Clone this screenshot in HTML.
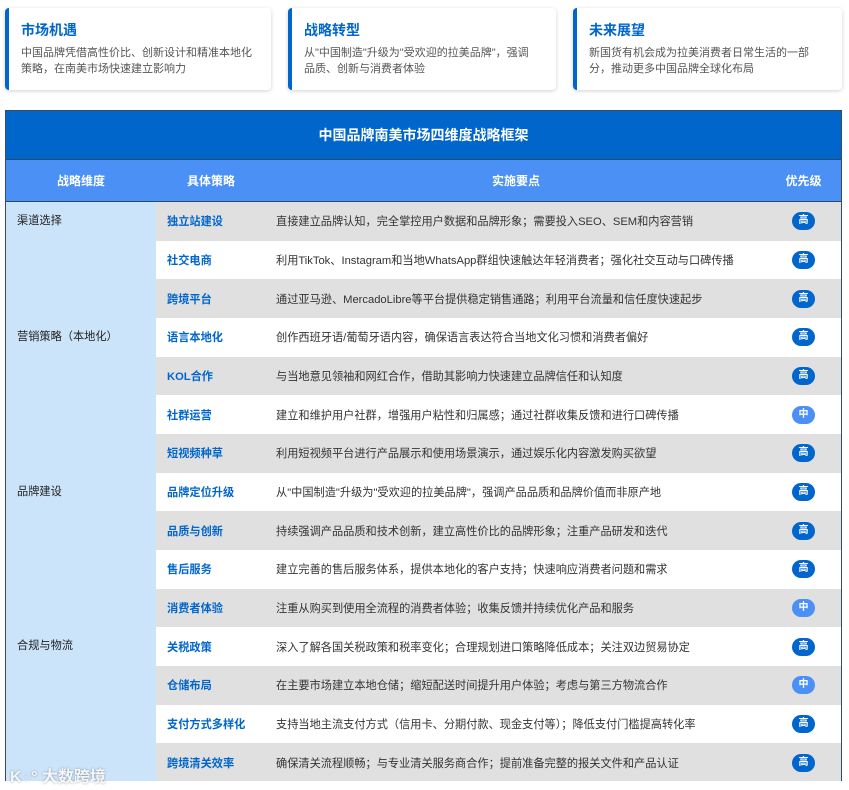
<!DOCTYPE html>
<html><head><meta charset="utf-8"><style>
*{margin:0;padding:0;box-sizing:border-box}
body{width:849px;height:790px;background:#fff;font-family:"Liberation Sans","Noto Sans CJK SC",sans-serif;position:relative;overflow:hidden}
.card{position:absolute;top:8px;height:82px;background:#fff;border-radius:4px;box-shadow:0 1px 4px rgba(0,0,0,.18);border-left:4px solid #0066cc;padding:13px 0 0 12px}
.card h3{font-size:14px;color:#0066cc;font-weight:bold;margin-bottom:6px;line-height:18px}
.card p{font-size:11px;color:#555;line-height:16px}
.tbl{position:absolute;left:5px;top:110px;width:837px;border:1px solid #3a4a5a;border-bottom:none;height:680px;overflow:hidden}
.title{height:49px;background:#0066cc;color:#fff;font-weight:bold;font-size:14px;text-align:center;line-height:48px;border-bottom:1px solid #2a4a6a}
.hdr{height:42px;background:#4a90f5;color:#fff;font-weight:bold;font-size:12px;display:flex;align-items:center;border-bottom:1px solid #2a4a6a}
.hdr div{text-align:center}
table{border-collapse:collapse;width:835px;table-layout:fixed;font-size:11.2px}
td{height:38.67px;padding:0 11px;vertical-align:middle}
td.d{background:#cce4fa;vertical-align:top;padding-top:10px;color:#222;font-size:11.2px}
td.s{color:#0066cc;font-weight:bold}
td.p{color:#333;padding-left:10px}
td.r{text-align:center;padding:0}
tr.g td.s,tr.g td.p,tr.g td.r{background:#e0e0e0}
.b{display:inline-block;width:23px;height:18px;border-radius:9px;background:#0066cc;color:#fff;font-size:10px;font-weight:bold;line-height:18px;text-align:center}
.b.m{background:#4a90f5}
.wm{position:absolute;left:10px;top:763px;font-size:16px;color:rgba(255,255,255,.9);text-shadow:0 0 2px rgba(0,0,0,.4);font-weight:bold}
</style></head><body>
<div class="card" style="left:5px;width:266px"><h3>市场机遇</h3><p>中国品牌凭借高性价比、创新设计和精准本地化<br>策略，在南美市场快速建立影响力</p></div>
<div class="card" style="left:288px;width:268px"><h3>战略转型</h3><p>从"中国制造"升级为"受欢迎的拉美品牌"，强调<br>品质、创新与消费者体验</p></div>
<div class="card" style="left:573px;width:269px"><h3>未来展望</h3><p>新国货有机会成为拉美消费者日常生活的一部<br>分，推动更多中国品牌全球化布局</p></div>
<div class="tbl">
<div class="title">中国品牌南美市场四维度战略框架</div>
<div class="hdr"><div style="width:150px">战略维度</div><div style="width:110px">具体策略</div><div style="width:500px">实施要点</div><div style="width:75px">优先级</div></div>
<table>
<colgroup><col style="width:150px"><col style="width:110px"><col style="width:500px"><col style="width:75px"></colgroup>
<tr class="g"><td class="d" rowspan="3">渠道选择</td><td class="s">独立站建设</td><td class="p">直接建立品牌认知，完全掌控用户数据和品牌形象；需要投入SEO、SEM和内容营销</td><td class="r"><span class="b">高</span></td></tr>
<tr><td class="s">社交电商</td><td class="p">利用TikTok、Instagram和当地WhatsApp群组快速触达年轻消费者；强化社交互动与口碑传播</td><td class="r"><span class="b">高</span></td></tr>
<tr class="g"><td class="s">跨境平台</td><td class="p">通过亚马逊、MercadoLibre等平台提供稳定销售通路；利用平台流量和信任度快速起步</td><td class="r"><span class="b">高</span></td></tr>
<tr><td class="d" rowspan="4">营销策略（本地化）</td><td class="s">语言本地化</td><td class="p">创作西班牙语/葡萄牙语内容，确保语言表达符合当地文化习惯和消费者偏好</td><td class="r"><span class="b">高</span></td></tr>
<tr class="g"><td class="s">KOL合作</td><td class="p">与当地意见领袖和网红合作，借助其影响力快速建立品牌信任和认知度</td><td class="r"><span class="b">高</span></td></tr>
<tr><td class="s">社群运营</td><td class="p">建立和维护用户社群，增强用户粘性和归属感；通过社群收集反馈和进行口碑传播</td><td class="r"><span class="b m">中</span></td></tr>
<tr class="g"><td class="s">短视频种草</td><td class="p">利用短视频平台进行产品展示和使用场景演示，通过娱乐化内容激发购买欲望</td><td class="r"><span class="b">高</span></td></tr>
<tr><td class="d" rowspan="4">品牌建设</td><td class="s">品牌定位升级</td><td class="p">从"中国制造"升级为"受欢迎的拉美品牌"，强调产品品质和品牌价值而非原产地</td><td class="r"><span class="b">高</span></td></tr>
<tr class="g"><td class="s">品质与创新</td><td class="p">持续强调产品品质和技术创新，建立高性价比的品牌形象；注重产品研发和迭代</td><td class="r"><span class="b">高</span></td></tr>
<tr><td class="s">售后服务</td><td class="p">建立完善的售后服务体系，提供本地化的客户支持；快速响应消费者问题和需求</td><td class="r"><span class="b">高</span></td></tr>
<tr class="g"><td class="s">消费者体验</td><td class="p">注重从购买到使用全流程的消费者体验；收集反馈并持续优化产品和服务</td><td class="r"><span class="b m">中</span></td></tr>
<tr><td class="d" rowspan="4">合规与物流</td><td class="s">关税政策</td><td class="p">深入了解各国关税政策和税率变化；合理规划进口策略降低成本；关注双边贸易协定</td><td class="r"><span class="b">高</span></td></tr>
<tr class="g"><td class="s">仓储布局</td><td class="p">在主要市场建立本地仓储；缩短配送时间提升用户体验；考虑与第三方物流合作</td><td class="r"><span class="b m">中</span></td></tr>
<tr><td class="s">支付方式多样化</td><td class="p">支持当地主流支付方式（信用卡、分期付款、现金支付等）；降低支付门槛提高转化率</td><td class="r"><span class="b">高</span></td></tr>
<tr class="g"><td class="s">跨境清关效率</td><td class="p">确保清关流程顺畅；与专业清关服务商合作；提前准备完整的报关文件和产品认证</td><td class="r"><span class="b">高</span></td></tr>
</table>
</div>
<div style="position:absolute;left:0;top:781px;width:849px;height:9px;background:#fff"></div>
<div class="wm">K◌° 大数跨境</div>
</body></html>
